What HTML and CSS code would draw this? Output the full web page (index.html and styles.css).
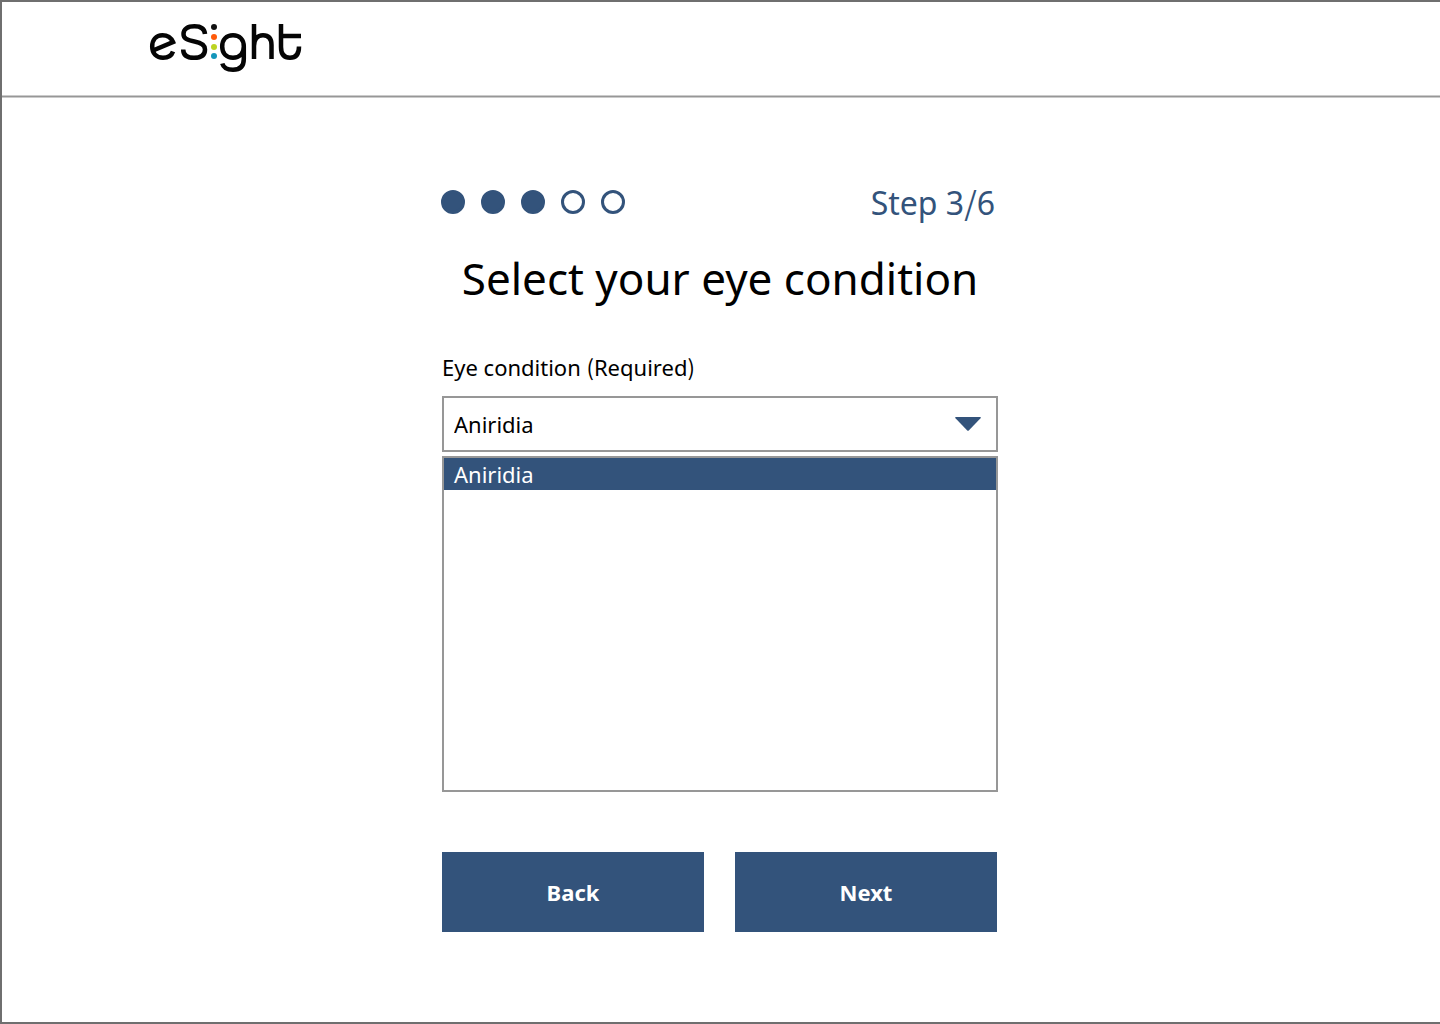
FILE: index.html
```html
<!DOCTYPE html>
<html lang="en">
<head>
<meta charset="utf-8">
<meta name="viewport" content="width=device-width, initial-scale=1">
<title>eSight – Select your eye condition</title>
<link rel="stylesheet" href="styles.css">
</head>
<body>
<div class="page">
  <header class="header">
    <a class="logo" href="#" aria-label="eSight">
      <svg width="156" height="52" viewBox="148 22 156 52" fill="none" stroke="#050505" stroke-width="4.500" aria-hidden="true">
        <path d="M153 50.5L173 42C171 37.500 167.500 35.200 162.500 35.200C156 35.200 152.200 40 152.200 46.500C152.200 53.500 156.500 57.800 163 57.800C168 57.800 171.500 56 173 51.500"/>
        <path d="M205 34C204.500 28.500 200.500 26.200 194.500 26.200C187.500 26.200 183.500 29 183.500 34C183.500 38.500 187 40.200 194.500 41.500C202 42.800 205 45 205 49.500C205 55 201 57.800 194 57.800C187 57.800 183.200 55 183.200 49.500"/>
        <path d="M243.800 46.500C243.800 39.500 239.500 35.200 233 35.200C226.500 35.200 222.200 39.500 222.200 46.500C222.200 53.500 226.500 57.800 233 57.800C239.500 57.800 243.800 53.500 243.800 46.500V59C243.800 66 240 69.800 233 69.800C227 69.800 223.500 68 222.300 63.500"/>
        <path d="M254 24V59M254 46C254 39 257.500 35.200 263 35.200C269 35.200 271.500 39 271.500 45V59"/>
        <path d="M281 24V47C281 54 284 57.800 290 57.800C296 57.800 299 54 299 46.500M281 36H301"/>
        <g stroke="none">
          <circle cx="214" cy="27" r="3" fill="#111"/>
          <circle cx="214" cy="37" r="3" fill="#ff5a0a"/>
          <circle cx="214" cy="47" r="3" fill="#bcd422"/>
          <circle cx="214" cy="56" r="3" fill="#1496ba"/>
        </g>
      </svg>
    </a>
  </header>
  <hr class="rule">
  <main class="main">
    <form class="form">
      <div class="progress">
        <ol class="dots" aria-hidden="true">
          <li class="dot dot-done"></li>
          <li class="dot dot-done"></li>
          <li class="dot dot-done"></li>
          <li class="dot"></li>
          <li class="dot"></li>
        </ol>
        <p class="step">Step 3<span class="mark">/</span>6</p>
      </div>
      <h1 class="title">Select your eye condition</h1>
      <label class="label" for="condition">Eye condition <span class="mark">(</span>Required<span class="mark">)</span></label>
      <div class="field">
        <select class="select" id="condition" required>
          <option>Aniridia</option>
        </select>
        <svg class="arrow" width="26" height="14" viewBox="0 0 26 14" aria-hidden="true"><path d="M0.800 0H25.200Q26.500 0 25.500 1.200L14 13.300Q13 14.300 12 13.300L0.500 1.200Q-0.500 0 0.800 0Z" fill="#33537b"/></svg>
      </div>
      <ul class="list" role="listbox" aria-label="Eye condition">
        <li class="option" role="option" aria-selected="true">Aniridia</li>
      </ul>
      <div class="actions">
        <button class="button" type="button">Back</button>
        <button class="button" type="submit">Next</button>
      </div>
    </form>
  </main>
</div>
</body>
</html>
```
FILE: styles.css
```css
* {
  box-sizing: border-box;
}

body {
  margin: 0;
  background: #fff;
  color: #000;
  font-family: "Noto Sans", sans-serif;
  font-size: 22px;
  line-height: 32px;
}

.page {
  min-height: 100vh;
  box-shadow: inset 2px 2px #6f6f6f, inset 0 -2px #6f6f6f;
}

.header {
  padding: 22px 148px 21px;
}

.logo,
.logo svg {
  display: block;
  width: 156px;
}

.rule {
  height: 3px;
  margin: 0 0 0 2px;
  border: solid #cbcbcb;
  border-width: 1px 0;
  background: #979797;
}

.main {
  padding: 86px 16px 90px;
}

.form {
  max-width: 556px;
  margin: 0 auto;
}

.progress {
  display: flex;
  align-items: center;
  justify-content: space-between;
  padding-right: 3px;
}

.dots {
  display: flex;
  gap: 16px;
  margin: 0 0 0 -1px;
  padding: 0 0 4px;
  list-style: none;
}

.dot {
  width: 24px;
  height: 24px;
  border: 3px solid #33537b;
  border-radius: 50%;
}

.dot-done {
  background: #33537b;
}

.step {
  margin: 0;
  padding-bottom: 2px;
  color: #33537b;
  font-size: 32px;
  line-height: 38px;
}

.mark {
  font-family: "Noto Sans CJK SC", sans-serif;
  line-height: 1;
}

.title {
  margin: 24px 0 43px;
  font-size: 44px;
  font-weight: 400;
  line-height: 60px;
  text-align: center;
}

.label {
  display: block;
  margin-bottom: 13px;
}

.field {
  position: relative;
}

.select {
  display: block;
  width: 100%;
  height: 56px;
  padding: 0 44px 0 10px;
  border: 2px solid #979797;
  border-radius: 0;
  background: #fff;
  color: #000;
  font: inherit;
  appearance: none;
}

.arrow {
  position: absolute;
  top: 21px;
  right: 17px;
  pointer-events: none;
}

.list {
  min-height: 336px;
  margin: 4px 0 60px;
  padding: 0;
  border: 2px solid #979797;
  list-style: none;
}

.option {
  padding: 0 10px;
  background: #33537b;
  color: #fff;
}

.actions {
  display: flex;
  gap: 31px;
}

.button {
  flex: 0 1 262px;
  height: 80px;
  padding: 0;
  border: 0;
  background: #33537b;
  color: #fff;
  font: inherit;
  font-weight: 700;
}
```
